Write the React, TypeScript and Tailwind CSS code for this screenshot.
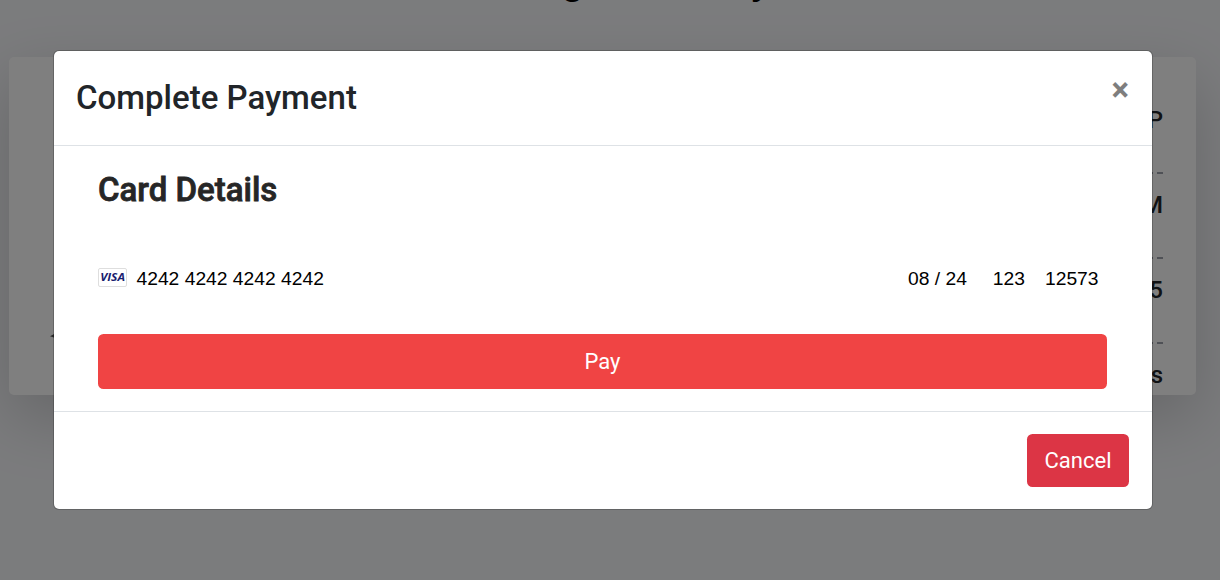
const rows = ["GBP", "4:45 PM", "12345", "2 hours"];

function VisaBadge() {
  return (
    <span className="-mt-[2px] flex h-[19px] w-[29px] items-center justify-center rounded-[2px] border border-[#dedede] bg-white">
      <svg width="27" height="17" viewBox="0 0 27 17">
        <text
          x="1.2"
          y="12.4"
          textLength="24.8"
          lengthAdjust="spacingAndGlyphs"
          fill="#191e70"
          className="font-['Open_Sans',sans-serif] text-[10.5px] font-bold italic"
        >
          VISA
        </text>
      </svg>
    </span>
  );
}

function Booking() {
  return (
    <main className="h-full overflow-hidden bg-[#f7f8fb]">
      <h1 className="-mt-[44px] h-[101px] pr-[15px] text-center text-[41px] leading-[49px] font-medium text-black">
        Booking Summary
      </h1>
      <section className="ml-[9px] h-[338px] w-[1187px] rounded-[5px] bg-white px-[33px] pt-[32px] shadow-[0_22px_66px_rgba(0,0,0,0.175)]">
        <div className="flex justify-between">
          <svg className="mt-[240px]" width="120" height="16" viewBox="0 0 120 16">
            <path d="M8 7.3L14 4V9.2Z" fill="#555" />
          </svg>
          <div className="w-[300px] text-right text-[24px] leading-[63px] font-medium text-[#212529]">
            {rows.map((row, i) => (
              <div key={row} className="h-[85px]">
                <div className={i === 3 ? "h-[83px] leading-[62px]" : "h-[83px]"}>{row}</div>
                {i < 3 && (
                  <svg className="block" width="300" height="2">
                    <path d="M300 1H0" stroke="#9fa3ad" strokeWidth="2" strokeDasharray="6 4" />
                  </svg>
                )}
              </div>
            ))}
          </div>
        </div>
      </section>
    </main>
  );
}

function PaymentDialog() {
  return (
    <div
      role="dialog"
      aria-modal="true"
      className="mt-[50px] ml-[53px] h-[460px] w-[1100px] rounded-[6px] border border-black/20 bg-white bg-clip-padding"
    >
      <header className="flex h-[95px] justify-between border-b border-[#dee2e6] pt-[22px] pr-[23px] pl-[22px]">
        <h5 className="text-[33px] leading-[49.5px] font-medium text-[#212529]">Complete Payment</h5>
        <button aria-label="Close" className="h-[33px] text-[33px] leading-[33px] font-bold text-black opacity-50">
          ×
        </button>
      </header>
      <div className="h-[265px] px-[44px] pt-[22px]">
        <h2 className="h-[44px] text-[33px] leading-[44px] font-medium text-[#262626] [-webkit-text-stroke:0.8px_#262626]">
          Card Details
        </h2>
        <div className="mt-[34px] mr-[9.5px] flex h-[64px] items-center font-['Liberation_Sans',Arial,sans-serif] text-[19.25px] text-black">
          <VisaBadge />
          <span className="mt-[2px] ml-[9.5px]">4242 4242 4242 4242</span>
          <span className="mt-[2px] ml-auto">08 / 24</span>
          <span className="mt-[2px] ml-[26px]">123</span>
          <span className="mt-[2px] ml-[20px]">12573</span>
        </div>
        <button className="mt-[24px] block h-[55px] w-[1009px] rounded-[5.5px] bg-[#f04444] text-[22px] text-white">
          Pay
        </button>
      </div>
      <footer className="flex h-[98px] justify-end border-t border-[#dee2e6] pt-[22px] pr-[23px]">
        <button className="h-[53px] w-[102px] rounded-[5.5px] bg-[#dc3545] text-[22px] text-white">Cancel</button>
      </footer>
    </div>
  );
}

export default function App() {
  return (
    <div className="relative h-[580px] w-[1220px] overflow-hidden font-[Roboto,sans-serif]">
      <Booking />
      <div className="absolute inset-0 overflow-hidden bg-black/50">
        <PaymentDialog />
      </div>
    </div>
  );
}
